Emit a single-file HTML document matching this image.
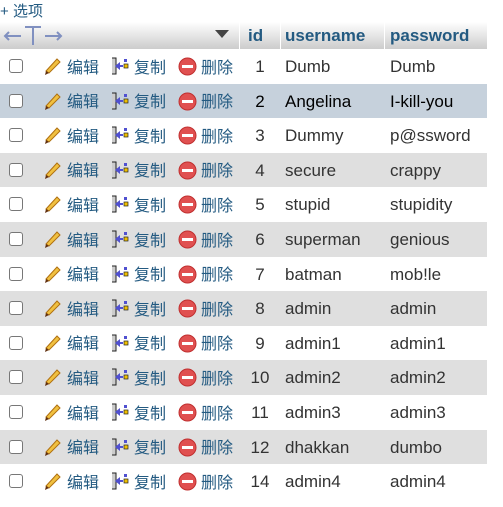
<!DOCTYPE html>
<html><head><meta charset="utf-8"><style>
body{margin:0;width:503px;height:507px;background:#fff;font-family:"Liberation Sans","Noto Sans CJK SC",sans-serif;font-size:16px;color:#333;position:relative;overflow:hidden}
.a{position:absolute}
.top{left:0;top:2px;color:#235a81;font-size:15px;line-height:18px}
.hdr{left:0;top:22px;width:487px;height:27px;background:linear-gradient(#fff,#ccc)}
.hdr .s{position:absolute;top:0;width:1px;height:27px;background:#fff}
.hdr b{position:absolute;top:3px;line-height:22px;color:#235a81;font-size:17px}
.row{left:0;width:487px;height:35px}
.row span{position:absolute;top:8px;height:20px;line-height:20px;white-space:nowrap;font-size:17px}
.row span.c{top:6.5px;font-size:16px}
.cb{position:absolute;left:9px;top:10px;width:12px;height:12px;border:1px solid #777;border-radius:3px;background:#fff}
.l{color:#235a81}
.c{font-family:"Noto Sans CJK SC",sans-serif}
</style></head><body>
<div class="a top">+ <span class="c">选项</span></div>
<div class="a hdr">
<svg style="position:absolute;left:3px;top:2px" width="60" height="22"><g stroke="#8090c0" stroke-width="2" fill="none"><path d="M2 12H18M6 8L2 12L6 16M42 12H58M54 8L58 12L54 16M22 3H38M30 3V21"/></g></svg>
<svg style="position:absolute;left:215px;top:8px" width="14" height="9"><path d="M0 0H14L7 8Z" fill="#444"/></svg>
<div class="s" style="left:239px"></div><div class="s" style="left:280px"></div><div class="s" style="left:384px"></div>
<b style="left:248px">id</b><b style="left:285px">username</b><b style="left:390px">password</b>
</div>
<div id="rows"></div>
<script>
var d=[[1,"Dumb","Dumb"],[2,"Angelina","I-kill-you"],[3,"Dummy","p@ssword"],[4,"secure","crappy"],[5,"stupid","stupidity"],[6,"superman","genious"],[7,"batman","mob!le"],[8,"admin","admin"],[9,"admin1","admin1"],[10,"admin2","admin2"],[11,"admin3","admin3"],[12,"dhakkan","dumbo"],[14,"admin4","admin4"]];
var h="";
d.forEach(function(r,i){
var bg=i==1?"#c6d1dc":(i%2?"#dfdfdf":"#fff");
var col=i==1?"#000":"#333";
h+='<div class="a row" style="top:'+(49+i*34.6)+'px;background:'+bg+';color:'+col+'">'+
'<div class="cb"></div>'+
'<svg style="position:absolute;left:42px;top:7px" width="20" height="20"><path d="M4 15L15 3L18 6L7 17Z" fill="#f0c040" stroke="#b07010"/><path d="M4 15L3 19L7 17Z" fill="#603010"/></svg>'+
'<span class="l c" style="left:67px">编辑</span>'+
'<svg style="position:absolute;left:110px;top:8px" width="20" height="18"><path d="M2 1H6V17H2" fill="#ccc" stroke="#222"/><path d="M5 9L10 5V8H13V10H10V13Z" fill="#5050d0"/><rect x="14" y="2" width="3" height="3" fill="#5050d0"/><rect x="14" y="7" width="4" height="4" fill="#f0c000" stroke="#222" stroke-width=".7"/></svg>'+
'<span class="l c" style="left:134px">复制</span>'+
'<svg style="position:absolute;left:178px;top:8px" width="19" height="19"><circle cx="9.5" cy="9.5" r="8.5" fill="#e05050" stroke="#c03030"/><rect x="4" y="8" width="11" height="3" fill="#fff"/></svg>'+
'<span class="l c" style="left:201px">删除</span>'+
'<span style="left:240px;width:40px;text-align:center">'+r[0]+'</span>'+
'<span style="left:285px">'+r[1]+'</span><span style="left:390px">'+r[2]+'</span></div>';
});
document.getElementById("rows").innerHTML=h;
</script>
</body></html>
